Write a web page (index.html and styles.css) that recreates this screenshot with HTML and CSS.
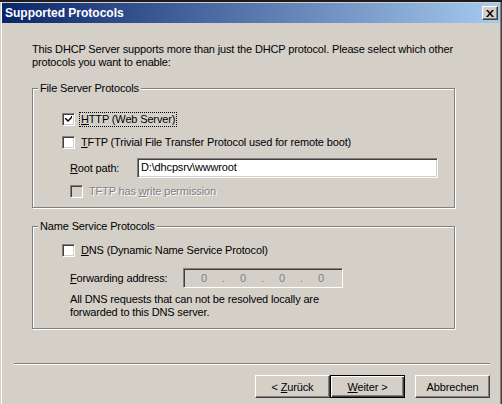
FILE: index.html
```html
<!DOCTYPE html>
<html lang="en">
<head>
  <meta charset="UTF-8" />
  <title>Supported Protocols</title>
  <link rel="stylesheet" href="styles.css">
</head>
<body>

  <div class="window">
    <div class="titlebar">
      <span class="title">Supported Protocols</span>
      <span class="close">
        <svg width="8" height="7" viewBox="0 0 8 7">
          <path d="M0 0h2l2 2.5 2-2.5h2l-3 3.5 3 3.5h-2l-2-2.5-2 2.5h-2l3-3.5z" fill="#000"/>
        </svg>
      </span>
    </div>

    <div class="content">
      <p class="intro">This DHCP Server supports more than just the DHCP protocol. Please select which other<br>protocols you want to enable:</p>

      <div class="group group-files">
        <div class="legend">File Server Protocols</div>
        <div class="row">
          <span class="check">
            <svg width="9" height="9" viewBox="0 0 9 9">
              <path d="M1 3h1l2 2 3-3v-1h1v2l-4 4-3-3z" fill="#000"/>
            </svg>
          </span>
          <span class="label focus"><u>H</u>TTP (Web Server)</span>
        </div>
        <div class="row">
          <span class="check"></span>
          <span class="label"><u>T</u>FTP (Trivial File Transfer Protocol used for remote boot)</span>
        </div>
        <div class="row row-field row-path">
          <span class="field-label"><u>R</u>oot path:</span>
          <span class="textbox">D:\dhcpsrv\wwwroot</span>
        </div>
        <div class="row row-indent">
          <span class="check disabled"></span>
          <span class="label disabled-text">TFTP has <u>w</u>rite permission</span>
        </div>
      </div>

      <div class="group group-names">
        <div class="legend">Name Service Protocols</div>
        <div class="row">
          <span class="check"></span>
          <span class="label"><u>D</u>NS (Dynamic Name Service Protocol)</span>
        </div>
        <div class="row row-field row-address">
          <span class="field-label"><u>F</u>orwarding address:</span>
          <span class="ipbox">
            <span class="octet">0</span><span class="dot">.</span>
            <span class="octet">0</span><span class="dot">.</span>
            <span class="octet">0</span><span class="dot">.</span>
            <span class="octet">0</span>
          </span>
        </div>
        <p class="note">All DNS requests that can not be resolved locally are<br>forwarded to this DNS server.</p>
      </div>
    </div>

    <div class="separator"></div>

    <div class="buttons">
      <button class="btn">&lt; <u>Z</u>urück</button>
      <button class="btn btn-default"><u>W</u>eiter &gt;</button>
      <button class="btn btn-cancel">Abbrechen</button>
    </div>
  </div>

</body>
</html>
```

FILE: styles.css
```css
body {
  margin: 0;
  background-color: #d4d0c8;
  font-family: "Liberation Sans", Arial, sans-serif;
  font-size: 11px;
  line-height: 13px;
  letter-spacing: -0.15px;
  color: #000;
}

.window {
  width: 502px;
  height: 404px;
  box-sizing: border-box;
  padding: 3px 2px 0 2px;
  background-color: #d4d0c8;
  box-shadow: inset 0 2px 0 #1c1c1c, inset 1px 1px 0 #d4d0c8, inset 2px 2px 0 #fff, inset -1px 0 0 #404040, inset -2px 0 0 #808080;
}

/* title bar */
.titlebar {
  height: 20px;
  display: flex;
  align-items: center;
  justify-content: space-between;
  padding: 0 2px 0 3px;
  background: linear-gradient(to right, #0a246a, #a6caf0);
}

.title {
  color: #fff;
  font-weight: bold;
  font-size: 12px;
  letter-spacing: 0;
}

.close {
  width: 16px;
  height: 14px;
  box-sizing: border-box;
  display: flex;
  align-items: center;
  justify-content: center;
  background-color: #d4d0c8;
  border: 1px solid;
  border-color: #fff #404040 #404040 #fff;
  box-shadow: inset -1px -1px 0 #808080;
}

/* dialog body */
.content {
  padding: 20px 0 0 30px;
}

.intro {
  margin: 0;
  white-space: nowrap;
}

.group {
  width: 423px;
  box-sizing: border-box;
  border: 1px solid #808080;
  box-shadow: 1px 1px 0 #fff, inset 1px 1px 0 #fff;
}

.group-files {
  margin-top: 19px;
  padding: 0 0 8px 29px;
}

.group-names {
  margin-top: 18px;
  padding: 0 0 9px 29px;
}

.legend {
  width: fit-content;
  margin: -7px 0 0 -24px;
  padding: 0 2px;
  background-color: #d4d0c8;
}

.row {
  display: flex;
  align-items: center;
  height: 16px;
  margin-top: 7px;
}

.group-files .legend + .row {
  margin-top: 16px;
}

.group-names .legend + .row {
  margin-top: 9px;
}

.row-field {
  height: 20px;
  padding-left: 8px;
}

.row-path {
  margin-top: 8px;
}

.row-indent {
  padding-left: 8px;
  margin-top: 5px;
}

.row-address {
  margin-top: 10px;
}

.check {
  width: 13px;
  height: 13px;
  box-sizing: border-box;
  display: flex;
  align-items: center;
  justify-content: center;
  background-color: #fff;
  border: 1px solid;
  border-color: #808080 #fff #fff #808080;
  box-shadow: inset 1px 1px 0 #404040, inset -1px -1px 0 #d4d0c8;
}

.check.disabled {
  background-color: #d4d0c8;
}

.label {
  margin-left: 4px;
  padding: 0 1px;
  border: 1px solid transparent;
}

.label.focus {
  border: 1px dotted #000;
}

.disabled-text {
  color: #808080;
  text-shadow: 1px 1px 0 #fff;
}

.field-label {
  width: 67px;
}

.row-address .field-label {
  width: 113px;
}

.textbox {
  width: 301px;
  height: 20px;
  box-sizing: border-box;
  padding: 2px 3px;
  background-color: #fff;
  border: 1px solid;
  border-color: #808080 #fff #fff #808080;
  box-shadow: inset 1px 1px 0 #404040, inset -1px -1px 0 #d4d0c8;
}

.ipbox {
  width: 160px;
  height: 20px;
  box-sizing: border-box;
  display: flex;
  align-items: center;
  padding: 0 6px 0 12px;
  color: #808080;
  border: 1px solid;
  border-color: #808080 #fff #fff #808080;
  box-shadow: inset 1px 1px 0 #404040, inset -1px -1px 0 #d4d0c8;
}

.octet {
  width: 16px;
  text-align: center;
}

.dot {
  width: 23px;
  text-align: center;
}

.note {
  margin: 5px 0 0 8px;
}

/* bottom part */
.separator {
  width: 476px;
  height: 0;
  margin: 34px 0 0 12px;
  border-top: 1px solid #808080;
  border-bottom: 1px solid #fff;
}

.buttons {
  display: flex;
  justify-content: flex-end;
  padding: 10px 10px 0 0;
}

.btn {
  width: 75px;
  height: 23px;
  box-sizing: border-box;
  padding: 0;
  font-family: "Liberation Sans", Arial, sans-serif;
  font-size: 11px;
  letter-spacing: -0.15px;
  color: #000;
  background-color: #d4d0c8;
  border: 1px solid;
  border-color: #fff #404040 #404040 #fff;
  box-shadow: inset -1px -1px 0 #808080;
}

.btn-default {
  border: 1px solid #000;
  box-shadow: inset 1px 1px 0 #fff, inset -1px -1px 0 #404040, inset -2px -2px 0 #808080;
}

.btn-cancel {
  margin-left: 10px;
}
```
